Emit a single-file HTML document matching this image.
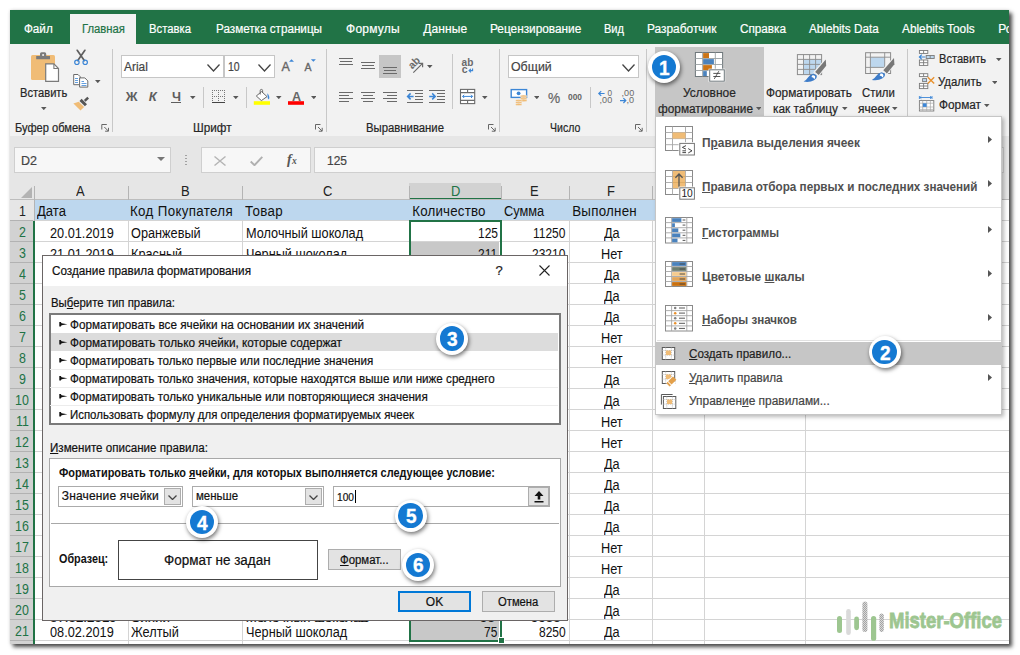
<!DOCTYPE html>
<html lang="ru"><head><meta charset="utf-8"><title>Условное форматирование</title>
<style>
html,body{margin:0;padding:0;background:#fff}
body{width:1020px;height:655px;position:relative;overflow:hidden;font-family:"Liberation Sans",sans-serif;font-size:12px}
#s{position:absolute;left:0;top:0;width:1020px;height:655px;overflow:hidden}
#s div,#s svg,#s span.t{position:absolute;box-sizing:border-box}
#s span.t{white-space:pre;-webkit-text-stroke:0.2px}
u{text-decoration:underline;text-underline-offset:1px}
</style></head><body><div id="s">
<div style="left:10px;top:10px;width:1000px;height:34px;background:#217346"></div>
<div style="left:10px;top:44px;width:1000px;height:92px;background:#f2f2f2"></div>
<div style="left:10px;top:136px;width:1000px;height:47px;background:#e6e6e6"></div>
<div style="left:70px;top:14px;width:66px;height:31px;background:#f2f2f2"></div>
<span class="t" style="left:24.00px;top:22.00px;font-size:12px;line-height:14px;color:#fff;transform:scaleX(0.9724);transform-origin:0 0;">Файл</span>
<span class="t" style="left:81.70px;top:22.00px;font-size:12px;line-height:14px;color:#217346;transform:scaleX(0.9412);transform-origin:0 0;">Главная</span>
<span class="t" style="left:149.00px;top:22.00px;font-size:12px;line-height:14px;color:#fff;transform:scaleX(0.9415);transform-origin:0 0;">Вставка</span>
<span class="t" style="left:215.70px;top:22.00px;font-size:12px;line-height:14px;color:#fff;transform:scaleX(0.9736);transform-origin:0 0;">Разметка страницы</span>
<span class="t" style="left:346.00px;top:22.00px;font-size:12px;line-height:14px;color:#fff;letter-spacing:0.254px;">Формулы</span>
<span class="t" style="left:423.30px;top:22.00px;font-size:12px;line-height:14px;color:#fff;letter-spacing:0.107px;">Данные</span>
<span class="t" style="left:490.00px;top:22.00px;font-size:12px;line-height:14px;color:#fff;transform:scaleX(0.9852);transform-origin:0 0;">Рецензирование</span>
<span class="t" style="left:604.30px;top:22.00px;font-size:12px;line-height:14px;color:#fff;transform:scaleX(0.9209);transform-origin:0 0;">Вид</span>
<span class="t" style="left:647.30px;top:22.00px;font-size:12px;line-height:14px;color:#fff;transform:scaleX(0.9916);transform-origin:0 0;">Разработчик</span>
<span class="t" style="left:740.00px;top:22.00px;font-size:12px;line-height:14px;color:#fff;transform:scaleX(0.9771);transform-origin:0 0;">Справка</span>
<span class="t" style="left:809.30px;top:22.00px;font-size:12px;line-height:14px;color:#fff;transform:scaleX(0.9765);transform-origin:0 0;">Ablebits Data</span>
<span class="t" style="left:902.30px;top:22.00px;font-size:12px;line-height:14px;color:#fff;transform:scaleX(0.9847);transform-origin:0 0;">Ablebits Tools</span>
<span class="t" style="left:998.30px;top:22.00px;font-size:12px;line-height:14px;color:#fff;">Ро</span>
<div style="left:112px;top:49px;width:1px;height:83px;background:#c8c8c8"></div>
<div style="left:326px;top:49px;width:1px;height:83px;background:#c8c8c8"></div>
<div style="left:499px;top:49px;width:1px;height:83px;background:#c8c8c8"></div>
<div style="left:646px;top:49px;width:1px;height:83px;background:#c8c8c8"></div>
<div style="left:907px;top:49px;width:1px;height:83px;background:#c8c8c8"></div>
<span class="t" style="left:19.70px;top:85.50px;font-size:12px;line-height:14px;color:#262626;transform:scaleX(0.9297);transform-origin:0 0;">Вставить</span>
<span class="t" style="left:14.60px;top:120.50px;font-size:12px;line-height:14px;color:#262626;transform:scaleX(0.9246);transform-origin:0 0;">Буфер обмена</span>
<span class="t" style="left:192.80px;top:120.50px;font-size:12px;line-height:14px;color:#262626;transform:scaleX(0.9751);transform-origin:0 0;">Шрифт</span>
<span class="t" style="left:365.60px;top:120.50px;font-size:12px;line-height:14px;color:#262626;transform:scaleX(0.9442);transform-origin:0 0;">Выравнивание</span>
<span class="t" style="left:550.00px;top:120.50px;font-size:12px;line-height:14px;color:#262626;transform:scaleX(0.8779);transform-origin:0 0;">Число</span>
<div style="left:121px;top:55px;width:103px;height:23px;background:#fff;border:1px solid #c6c6c6"></div>
<div style="left:224px;top:55px;width:51px;height:23px;background:#fff;border:1px solid #c6c6c6"></div>
<div style="left:508px;top:55px;width:131px;height:23px;background:#fff;border:1px solid #c6c6c6"></div>
<span class="t" style="left:124.20px;top:59.80px;font-size:12.5px;line-height:14px;color:#444;transform:scaleX(0.9514);transform-origin:0 0;">Arial</span>
<span class="t" style="left:227.60px;top:59.80px;font-size:12.5px;line-height:14px;color:#444;transform:scaleX(0.8413);transform-origin:0 0;">10</span>
<span class="t" style="left:511.00px;top:59.80px;font-size:12.5px;line-height:14px;color:#444;transform:scaleX(0.9893);transform-origin:0 0;">Общий</span>
<svg style="left:207px;top:63.5px;" width="13" height="8" viewBox="0 0 13 8"><path d="M0.5 0.5 L6.5 7 L12.5 0.5" fill="none" stroke="#444" stroke-width="1.3"/></svg>
<svg style="left:257.6px;top:63.5px;" width="13" height="8" viewBox="0 0 13 8"><path d="M0.5 0.5 L6.5 7 L12.5 0.5" fill="none" stroke="#444" stroke-width="1.3"/></svg>
<svg style="left:622px;top:63.5px;" width="13" height="8" viewBox="0 0 13 8"><path d="M0.5 0.5 L6.5 7 L12.5 0.5" fill="none" stroke="#444" stroke-width="1.3"/></svg>
<span class="t" style="left:125.80px;top:88.80px;font-size:13px;line-height:15px;color:#5e5e5e;font-weight:700;letter-spacing:0.250px;-webkit-text-stroke:0;">Ж</span>
<span class="t" style="left:148.80px;top:88.80px;font-size:13px;line-height:15px;color:#5e5e5e;font-weight:700;font-style:italic;letter-spacing:0.800px;-webkit-text-stroke:0;">К</span>
<span class="t" style="left:171.50px;top:88.80px;font-size:13px;line-height:15px;color:#5e5e5e;font-weight:700;transform:scaleX(0.9846);transform-origin:0 0;-webkit-text-stroke:0;">Ч</span>
<div style="left:171px;top:102px;width:10px;height:1px;background:#5e5e5e"></div>
<svg style="left:190px;top:96px;" width="5.6" height="3.2" viewBox="0 0 5.6 3.2"><path d="M0 0 H5.6 L2.8 3.2 Z" fill="#585858"/></svg>
<div style="left:203px;top:87px;width:1px;height:21px;background:#c8c8c8"></div>
<div style="left:246px;top:87px;width:1px;height:21px;background:#c8c8c8"></div>
<svg style="left:233px;top:96px;" width="5.6" height="3.2" viewBox="0 0 5.6 3.2"><path d="M0 0 H5.6 L2.8 3.2 Z" fill="#585858"/></svg>
<svg style="left:276px;top:96px;" width="5.6" height="3.2" viewBox="0 0 5.6 3.2"><path d="M0 0 H5.6 L2.8 3.2 Z" fill="#585858"/></svg>
<svg style="left:310.5px;top:96px;" width="5.6" height="3.2" viewBox="0 0 5.6 3.2"><path d="M0 0 H5.6 L2.8 3.2 Z" fill="#585858"/></svg>
<div style="left:655px;top:47px;width:109px;height:70px;background:#c6c6c6"></div>
<span class="t" style="left:683.20px;top:85.80px;font-size:12px;line-height:14px;color:#262626;transform:scaleX(0.9965);transform-origin:0 0;">Условное</span>
<span class="t" style="left:657.70px;top:101.60px;font-size:12px;line-height:14px;color:#262626;transform:scaleX(0.9859);transform-origin:0 0;">форматирование</span>
<svg style="left:755.5px;top:107px;" width="5.6" height="3.2" viewBox="0 0 5.6 3.2"><path d="M0 0 H5.6 L2.8 3.2 Z" fill="#585858"/></svg>
<span class="t" style="left:766.40px;top:85.80px;font-size:12px;line-height:14px;color:#262626;transform:scaleX(0.9865);transform-origin:0 0;">Форматировать</span>
<span class="t" style="left:773.30px;top:101.60px;font-size:12px;line-height:14px;color:#262626;transform:scaleX(0.9891);transform-origin:0 0;">как таблицу</span>
<svg style="left:842px;top:107px;" width="5.6" height="3.2" viewBox="0 0 5.6 3.2"><path d="M0 0 H5.6 L2.8 3.2 Z" fill="#585858"/></svg>
<span class="t" style="left:861.50px;top:85.80px;font-size:12px;line-height:14px;color:#262626;transform:scaleX(0.9486);transform-origin:0 0;">Стили</span>
<span class="t" style="left:858.00px;top:101.60px;font-size:12px;line-height:14px;color:#262626;letter-spacing:0.028px;">ячеек</span>
<svg style="left:892px;top:107px;" width="5.6" height="3.2" viewBox="0 0 5.6 3.2"><path d="M0 0 H5.6 L2.8 3.2 Z" fill="#585858"/></svg>
<span class="t" style="left:938.50px;top:52.00px;font-size:12px;line-height:14px;color:#262626;transform:scaleX(0.9258);transform-origin:0 0;">Вставить</span>
<svg style="left:996px;top:57.5px;" width="5.6" height="3.2" viewBox="0 0 5.6 3.2"><path d="M0 0 H5.6 L2.8 3.2 Z" fill="#585858"/></svg>
<span class="t" style="left:937.70px;top:75.00px;font-size:12px;line-height:14px;color:#262626;transform:scaleX(0.9514);transform-origin:0 0;">Удалить</span>
<svg style="left:991.5px;top:80.5px;" width="5.6" height="3.2" viewBox="0 0 5.6 3.2"><path d="M0 0 H5.6 L2.8 3.2 Z" fill="#585858"/></svg>
<span class="t" style="left:938.50px;top:98.30px;font-size:12px;line-height:14px;color:#262626;transform:scaleX(0.9850);transform-origin:0 0;">Формат</span>
<svg style="left:984px;top:104px;" width="5.6" height="3.2" viewBox="0 0 5.6 3.2"><path d="M0 0 H5.6 L2.8 3.2 Z" fill="#585858"/></svg>
<div style="left:452px;top:54px;width:1px;height:55px;background:#c8c8c8"></div>
<div style="left:590px;top:87px;width:1px;height:21px;background:#c8c8c8"></div>
<div style="left:379px;top:55px;width:22px;height:23px;background:#c6c6c6"></div>
<svg style="left:427px;top:65px;" width="5.6" height="3.2" viewBox="0 0 5.6 3.2"><path d="M0 0 H5.6 L2.8 3.2 Z" fill="#585858"/></svg>
<svg style="left:482px;top:96px;" width="5.6" height="3.2" viewBox="0 0 5.6 3.2"><path d="M0 0 H5.6 L2.8 3.2 Z" fill="#585858"/></svg>
<svg style="left:533.5px;top:96px;" width="5.6" height="3.2" viewBox="0 0 5.6 3.2"><path d="M0 0 H5.6 L2.8 3.2 Z" fill="#585858"/></svg>
<svg style="left:41px;top:107px;" width="5.6" height="3.2" viewBox="0 0 5.6 3.2"><path d="M0 0 H5.6 L2.8 3.2 Z" fill="#585858"/></svg>
<svg style="left:95px;top:80px;" width="5.6" height="3.2" viewBox="0 0 5.6 3.2"><path d="M0 0 H5.6 L2.8 3.2 Z" fill="#585858"/></svg>
<span class="t" style="left:547.50px;top:89.60px;font-size:14.5px;line-height:16px;color:#666;transform:scaleX(0.9453);transform-origin:0 0;">%</span>
<span class="t" style="left:567.80px;top:91.80px;font-size:8.6px;line-height:10px;color:#666;font-weight:700;transform:scaleX(0.9760);transform-origin:0 0;-webkit-text-stroke:0;">000</span>
<div style="left:14px;top:147px;width:157px;height:26px;background:#f7f7f7;border:1px solid #cfcfcf"></div>
<div style="left:201px;top:147px;width:110px;height:26px;background:#f7f7f7;border:1px solid #cfcfcf"></div>
<div style="left:314px;top:147px;width:690px;height:26px;background:#f7f7f7;border:1px solid #cfcfcf"></div>
<span class="t" style="left:21.00px;top:153.60px;font-size:12.5px;line-height:14px;color:#444;letter-spacing:0.008px;">D2</span>
<svg style="left:156.7px;top:157px;" width="8" height="4" viewBox="0 0 8 4"><path d="M0 0 H8 L4.0 4 Z" fill="#777"/></svg>
<div style="left:185.3px;top:154.5px;width:1.6px;height:1.6px;background:#a2a2a2"></div>
<div style="left:185.3px;top:157.5px;width:1.6px;height:1.6px;background:#a2a2a2"></div>
<div style="left:185.3px;top:160.5px;width:1.6px;height:1.6px;background:#a2a2a2"></div>
<div style="left:185.3px;top:163.5px;width:1.6px;height:1.6px;background:#a2a2a2"></div>
<svg style="left:214px;top:155.5px;" width="12" height="10" viewBox="0 0 12 10"><path d="M0.5 0.5 L11.5 9.5 M11.5 0.5 L0.5 9.5" stroke="#b5b5b5" stroke-width="1.4" fill="none"/></svg>
<svg style="left:250px;top:155.5px;" width="13" height="10" viewBox="0 0 13 10"><path d="M0.7 5.5 L4.5 9.2 L12.3 0.8" stroke="#b0b0b0" stroke-width="1.9" fill="none"/></svg>
<span class="t" style="left:287.00px;top:151.60px;font-size:14px;line-height:16px;color:#555;font-weight:700;font-style:italic;font-family:'Liberation Serif', serif;-webkit-text-stroke:0;">f</span>
<span class="t" style="left:292.00px;top:156.40px;font-size:9.5px;line-height:11px;color:#555;font-weight:700;font-style:italic;font-family:'Liberation Serif', serif;-webkit-text-stroke:0;">x</span>
<span class="t" style="left:326.50px;top:154.00px;font-size:12.5px;line-height:14px;color:#444;transform:scaleX(0.9588);transform-origin:0 0;">125</span>
<div style="left:10px;top:183px;width:1000px;height:17px;background:#e6e6e6"></div>
<div style="left:10px;top:200px;width:24px;height:444px;background:#e6e6e6"></div>
<div style="left:34px;top:200px;width:976px;height:444px;background:#fff"></div>
<div style="left:35px;top:200px;width:620px;height:21px;background:#bdd7ee"></div>
<div style="left:409px;top:183px;width:92px;height:17px;background:#d2d2d2"></div>
<div style="left:409px;top:198px;width:92px;height:2px;background:#217346"></div>
<div style="left:10px;top:221px;width:23px;height:423px;background:#d2d2d2"></div>
<div style="left:10px;top:220px;width:1000px;height:1px;background:#d4d4d4"></div>
<div style="left:10px;top:220px;width:23px;height:1px;background:#b2b2b2"></div>
<div style="left:10px;top:241px;width:1000px;height:1px;background:#d4d4d4"></div>
<div style="left:10px;top:241px;width:23px;height:1px;background:#b2b2b2"></div>
<div style="left:10px;top:262px;width:1000px;height:1px;background:#d4d4d4"></div>
<div style="left:10px;top:262px;width:23px;height:1px;background:#b2b2b2"></div>
<div style="left:10px;top:283px;width:1000px;height:1px;background:#d4d4d4"></div>
<div style="left:10px;top:283px;width:23px;height:1px;background:#b2b2b2"></div>
<div style="left:10px;top:304px;width:1000px;height:1px;background:#d4d4d4"></div>
<div style="left:10px;top:304px;width:23px;height:1px;background:#b2b2b2"></div>
<div style="left:10px;top:325px;width:1000px;height:1px;background:#d4d4d4"></div>
<div style="left:10px;top:325px;width:23px;height:1px;background:#b2b2b2"></div>
<div style="left:10px;top:346px;width:1000px;height:1px;background:#d4d4d4"></div>
<div style="left:10px;top:346px;width:23px;height:1px;background:#b2b2b2"></div>
<div style="left:10px;top:367px;width:1000px;height:1px;background:#d4d4d4"></div>
<div style="left:10px;top:367px;width:23px;height:1px;background:#b2b2b2"></div>
<div style="left:10px;top:388px;width:1000px;height:1px;background:#d4d4d4"></div>
<div style="left:10px;top:388px;width:23px;height:1px;background:#b2b2b2"></div>
<div style="left:10px;top:409px;width:1000px;height:1px;background:#d4d4d4"></div>
<div style="left:10px;top:409px;width:23px;height:1px;background:#b2b2b2"></div>
<div style="left:10px;top:430px;width:1000px;height:1px;background:#d4d4d4"></div>
<div style="left:10px;top:430px;width:23px;height:1px;background:#b2b2b2"></div>
<div style="left:10px;top:451px;width:1000px;height:1px;background:#d4d4d4"></div>
<div style="left:10px;top:451px;width:23px;height:1px;background:#b2b2b2"></div>
<div style="left:10px;top:472px;width:1000px;height:1px;background:#d4d4d4"></div>
<div style="left:10px;top:472px;width:23px;height:1px;background:#b2b2b2"></div>
<div style="left:10px;top:493px;width:1000px;height:1px;background:#d4d4d4"></div>
<div style="left:10px;top:493px;width:23px;height:1px;background:#b2b2b2"></div>
<div style="left:10px;top:514px;width:1000px;height:1px;background:#d4d4d4"></div>
<div style="left:10px;top:514px;width:23px;height:1px;background:#b2b2b2"></div>
<div style="left:10px;top:535px;width:1000px;height:1px;background:#d4d4d4"></div>
<div style="left:10px;top:535px;width:23px;height:1px;background:#b2b2b2"></div>
<div style="left:10px;top:556px;width:1000px;height:1px;background:#d4d4d4"></div>
<div style="left:10px;top:556px;width:23px;height:1px;background:#b2b2b2"></div>
<div style="left:10px;top:577px;width:1000px;height:1px;background:#d4d4d4"></div>
<div style="left:10px;top:577px;width:23px;height:1px;background:#b2b2b2"></div>
<div style="left:10px;top:598px;width:1000px;height:1px;background:#d4d4d4"></div>
<div style="left:10px;top:598px;width:23px;height:1px;background:#b2b2b2"></div>
<div style="left:10px;top:619px;width:1000px;height:1px;background:#d4d4d4"></div>
<div style="left:10px;top:619px;width:23px;height:1px;background:#b2b2b2"></div>
<div style="left:10px;top:640px;width:1000px;height:1px;background:#d4d4d4"></div>
<div style="left:10px;top:640px;width:23px;height:1px;background:#b2b2b2"></div>
<div style="left:10px;top:199px;width:1000px;height:1px;background:#bdbdbd"></div>
<div style="left:34px;top:186px;width:1px;height:14px;background:#b4b4b4"></div>
<div style="left:128px;top:186px;width:1px;height:14px;background:#b4b4b4"></div>
<div style="left:128px;top:221px;width:1px;height:423px;background:#d4d4d4"></div>
<div style="left:242px;top:186px;width:1px;height:14px;background:#b4b4b4"></div>
<div style="left:242px;top:221px;width:1px;height:423px;background:#d4d4d4"></div>
<div style="left:409px;top:186px;width:1px;height:14px;background:#b4b4b4"></div>
<div style="left:409px;top:221px;width:1px;height:423px;background:#d4d4d4"></div>
<div style="left:501px;top:186px;width:1px;height:14px;background:#b4b4b4"></div>
<div style="left:501px;top:221px;width:1px;height:423px;background:#d4d4d4"></div>
<div style="left:569px;top:186px;width:1px;height:14px;background:#b4b4b4"></div>
<div style="left:569px;top:221px;width:1px;height:423px;background:#d4d4d4"></div>
<div style="left:652px;top:186px;width:1px;height:14px;background:#b4b4b4"></div>
<div style="left:652px;top:221px;width:1px;height:423px;background:#d4d4d4"></div>
<div style="left:704px;top:186px;width:1px;height:14px;background:#b4b4b4"></div>
<div style="left:704px;top:221px;width:1px;height:423px;background:#d4d4d4"></div>
<div style="left:805px;top:186px;width:1px;height:14px;background:#b4b4b4"></div>
<div style="left:805px;top:221px;width:1px;height:423px;background:#d4d4d4"></div>
<div style="left:34px;top:200px;width:1px;height:21px;background:#b4b4b4"></div>
<div style="left:33px;top:221px;width:2px;height:423px;background:#217346"></div>
<svg style="left:21px;top:187px;" width="11" height="11" viewBox="0 0 11 11"><path d="M11 0 V11 H0 Z" fill="#b3b3b3"/></svg>
<span class="t" style="left:76.19px;top:184.00px;font-size:13.33px;line-height:15px;color:#222;transform:scale(0.9700,1.07);transform-origin:0 12px;-webkit-text-stroke:0;">A</span>
<span class="t" style="left:180.69px;top:184.00px;font-size:13.33px;line-height:15px;color:#222;transform:scale(0.9700,1.07);transform-origin:0 12px;-webkit-text-stroke:0;">B</span>
<span class="t" style="left:323.32px;top:184.00px;font-size:13.33px;line-height:15px;color:#222;transform:scale(0.9700,1.07);transform-origin:0 12px;-webkit-text-stroke:0;">C</span>
<span class="t" style="left:530.39px;top:184.00px;font-size:13.33px;line-height:15px;color:#222;transform:scale(0.9700,1.07);transform-origin:0 12px;-webkit-text-stroke:0;">E</span>
<span class="t" style="left:607.44px;top:184.00px;font-size:13.33px;line-height:15px;color:#222;transform:scale(0.9700,1.07);transform-origin:0 12px;-webkit-text-stroke:0;">F</span>
<span class="t" style="left:450.62px;top:184.00px;font-size:13.33px;line-height:15px;color:#217346;transform:scale(0.9700,1.07);transform-origin:0 12px;-webkit-text-stroke:0;">D</span>
<span class="t" style="left:18.55px;top:204.30px;font-size:13.33px;line-height:15px;color:#222;transform:scale(0.9300,1.07);transform-origin:0 12px;-webkit-text-stroke:0;">1</span>
<span class="t" style="left:18.55px;top:225.30px;font-size:13.33px;line-height:15px;color:#217346;transform:scale(0.9300,1.07);transform-origin:0 12px;-webkit-text-stroke:0;">2</span>
<span class="t" style="left:18.55px;top:246.30px;font-size:13.33px;line-height:15px;color:#217346;transform:scale(0.9300,1.07);transform-origin:0 12px;-webkit-text-stroke:0;">3</span>
<span class="t" style="left:18.55px;top:267.30px;font-size:13.33px;line-height:15px;color:#217346;transform:scale(0.9300,1.07);transform-origin:0 12px;-webkit-text-stroke:0;">4</span>
<span class="t" style="left:18.55px;top:288.30px;font-size:13.33px;line-height:15px;color:#217346;transform:scale(0.9300,1.07);transform-origin:0 12px;-webkit-text-stroke:0;">5</span>
<span class="t" style="left:18.55px;top:309.30px;font-size:13.33px;line-height:15px;color:#217346;transform:scale(0.9300,1.07);transform-origin:0 12px;-webkit-text-stroke:0;">6</span>
<span class="t" style="left:18.55px;top:330.30px;font-size:13.33px;line-height:15px;color:#217346;transform:scale(0.9300,1.07);transform-origin:0 12px;-webkit-text-stroke:0;">7</span>
<span class="t" style="left:18.55px;top:351.30px;font-size:13.33px;line-height:15px;color:#217346;transform:scale(0.9300,1.07);transform-origin:0 12px;-webkit-text-stroke:0;">8</span>
<span class="t" style="left:18.55px;top:372.30px;font-size:13.33px;line-height:15px;color:#217346;transform:scale(0.9300,1.07);transform-origin:0 12px;-webkit-text-stroke:0;">9</span>
<span class="t" style="left:15.10px;top:393.30px;font-size:13.33px;line-height:15px;color:#217346;transform:scale(0.9300,1.07);transform-origin:0 12px;-webkit-text-stroke:0;">10</span>
<span class="t" style="left:15.56px;top:414.30px;font-size:13.33px;line-height:15px;color:#217346;transform:scale(0.9300,1.07);transform-origin:0 12px;-webkit-text-stroke:0;">11</span>
<span class="t" style="left:15.10px;top:435.30px;font-size:13.33px;line-height:15px;color:#217346;transform:scale(0.9300,1.07);transform-origin:0 12px;-webkit-text-stroke:0;">12</span>
<span class="t" style="left:15.10px;top:456.30px;font-size:13.33px;line-height:15px;color:#217346;transform:scale(0.9300,1.07);transform-origin:0 12px;-webkit-text-stroke:0;">13</span>
<span class="t" style="left:15.10px;top:477.30px;font-size:13.33px;line-height:15px;color:#217346;transform:scale(0.9300,1.07);transform-origin:0 12px;-webkit-text-stroke:0;">14</span>
<span class="t" style="left:15.10px;top:498.30px;font-size:13.33px;line-height:15px;color:#217346;transform:scale(0.9300,1.07);transform-origin:0 12px;-webkit-text-stroke:0;">15</span>
<span class="t" style="left:15.10px;top:519.30px;font-size:13.33px;line-height:15px;color:#217346;transform:scale(0.9300,1.07);transform-origin:0 12px;-webkit-text-stroke:0;">16</span>
<span class="t" style="left:15.10px;top:540.30px;font-size:13.33px;line-height:15px;color:#217346;transform:scale(0.9300,1.07);transform-origin:0 12px;-webkit-text-stroke:0;">17</span>
<span class="t" style="left:15.10px;top:561.30px;font-size:13.33px;line-height:15px;color:#217346;transform:scale(0.9300,1.07);transform-origin:0 12px;-webkit-text-stroke:0;">18</span>
<span class="t" style="left:15.10px;top:582.30px;font-size:13.33px;line-height:15px;color:#217346;transform:scale(0.9300,1.07);transform-origin:0 12px;-webkit-text-stroke:0;">19</span>
<span class="t" style="left:15.10px;top:603.30px;font-size:13.33px;line-height:15px;color:#217346;transform:scale(0.9300,1.07);transform-origin:0 12px;-webkit-text-stroke:0;">20</span>
<span class="t" style="left:15.10px;top:624.30px;font-size:13.33px;line-height:15px;color:#217346;transform:scale(0.9300,1.07);transform-origin:0 12px;-webkit-text-stroke:0;">21</span>
<span class="t" style="left:37.00px;top:203.70px;font-size:13.33px;line-height:15px;color:#111;transform:scale(0.9825,1.07);transform-origin:0 12px;-webkit-text-stroke:0;">Дата</span>
<span class="t" style="left:130.00px;top:203.70px;font-size:13.33px;line-height:15px;color:#111;letter-spacing:0.338px;transform:scale(1.0000,1.07);transform-origin:0 12px;-webkit-text-stroke:0;">Код Покупателя</span>
<span class="t" style="left:245.00px;top:203.70px;font-size:13.33px;line-height:15px;color:#111;letter-spacing:0.344px;transform:scale(1.0000,1.07);transform-origin:0 12px;-webkit-text-stroke:0;">Товар</span>
<span class="t" style="left:412.20px;top:203.70px;font-size:13.33px;line-height:15px;color:#111;letter-spacing:0.192px;transform:scale(1.0000,1.07);transform-origin:0 12px;-webkit-text-stroke:0;">Количество</span>
<span class="t" style="left:503.50px;top:203.70px;font-size:13.33px;line-height:15px;color:#111;transform:scale(0.9596,1.07);transform-origin:0 12px;-webkit-text-stroke:0;">Сумма</span>
<span class="t" style="left:572.20px;top:203.70px;font-size:13.33px;line-height:15px;color:#111;letter-spacing:0.260px;transform:scale(1.0000,1.07);transform-origin:0 12px;-webkit-text-stroke:0;">Выполнен</span>
<div style="left:411px;top:242px;width:88px;height:398px;background:#c8c8c8"></div>
<div style="left:411px;top:262px;width:88px;height:1px;background:#bdbdbd"></div>
<div style="left:411px;top:283px;width:88px;height:1px;background:#bdbdbd"></div>
<div style="left:411px;top:304px;width:88px;height:1px;background:#bdbdbd"></div>
<div style="left:411px;top:325px;width:88px;height:1px;background:#bdbdbd"></div>
<div style="left:411px;top:346px;width:88px;height:1px;background:#bdbdbd"></div>
<div style="left:411px;top:367px;width:88px;height:1px;background:#bdbdbd"></div>
<div style="left:411px;top:388px;width:88px;height:1px;background:#bdbdbd"></div>
<div style="left:411px;top:409px;width:88px;height:1px;background:#bdbdbd"></div>
<div style="left:411px;top:430px;width:88px;height:1px;background:#bdbdbd"></div>
<div style="left:411px;top:451px;width:88px;height:1px;background:#bdbdbd"></div>
<div style="left:411px;top:472px;width:88px;height:1px;background:#bdbdbd"></div>
<div style="left:411px;top:493px;width:88px;height:1px;background:#bdbdbd"></div>
<div style="left:411px;top:514px;width:88px;height:1px;background:#bdbdbd"></div>
<div style="left:411px;top:535px;width:88px;height:1px;background:#bdbdbd"></div>
<div style="left:411px;top:556px;width:88px;height:1px;background:#bdbdbd"></div>
<div style="left:411px;top:577px;width:88px;height:1px;background:#bdbdbd"></div>
<div style="left:411px;top:598px;width:88px;height:1px;background:#bdbdbd"></div>
<div style="left:411px;top:619px;width:88px;height:1px;background:#bdbdbd"></div>
<div style="left:411px;top:640px;width:88px;height:1px;background:#bdbdbd"></div>
<span class="t" style="left:50.18px;top:225.70px;font-size:13.33px;line-height:15px;color:#111;transform:scale(0.9550,1.07);transform-origin:0 12px;-webkit-text-stroke:0;">20.01.2019</span>
<span class="t" style="left:130.70px;top:225.70px;font-size:13.33px;line-height:15px;color:#111;transform:scale(0.9550,1.07);transform-origin:0 12px;-webkit-text-stroke:0;">Оранжевый</span>
<span class="t" style="left:245.70px;top:225.70px;font-size:13.33px;line-height:15px;color:#111;transform:scale(0.9550,1.07);transform-origin:0 12px;-webkit-text-stroke:0;">Молочный шоколад</span>
<span class="t" style="left:477.58px;top:225.70px;font-size:13.33px;line-height:15px;color:#111;transform:scale(0.9000,1.07);transform-origin:0 12px;-webkit-text-stroke:0;">125</span>
<span class="t" style="left:533.13px;top:225.70px;font-size:13.33px;line-height:15px;color:#111;transform:scale(0.9000,1.07);transform-origin:0 12px;-webkit-text-stroke:0;">11250</span>
<span class="t" style="left:50.18px;top:246.70px;font-size:13.33px;line-height:15px;color:#111;transform:scale(0.9550,1.07);transform-origin:0 12px;-webkit-text-stroke:0;">21.01.2019</span>
<span class="t" style="left:130.70px;top:246.70px;font-size:13.33px;line-height:15px;color:#111;transform:scale(0.9550,1.07);transform-origin:0 12px;-webkit-text-stroke:0;">Красный</span>
<span class="t" style="left:245.70px;top:246.70px;font-size:13.33px;line-height:15px;color:#111;transform:scale(0.9550,1.07);transform-origin:0 12px;-webkit-text-stroke:0;">Черный шоколад</span>
<span class="t" style="left:478.48px;top:246.70px;font-size:13.33px;line-height:15px;color:#111;transform:scale(0.9000,1.07);transform-origin:0 12px;-webkit-text-stroke:0;">211</span>
<span class="t" style="left:532.24px;top:246.70px;font-size:13.33px;line-height:15px;color:#111;transform:scale(0.9000,1.07);transform-origin:0 12px;-webkit-text-stroke:0;">23210</span>
<span class="t" style="left:50.18px;top:603.70px;font-size:13.33px;line-height:15px;color:#111;transform:scale(0.9550,1.07);transform-origin:0 12px;-webkit-text-stroke:0;">07.02.2019</span>
<span class="t" style="left:130.70px;top:603.70px;font-size:13.33px;line-height:15px;color:#111;transform:scale(0.9550,1.07);transform-origin:0 12px;-webkit-text-stroke:0;">Синий</span>
<span class="t" style="left:245.70px;top:603.70px;font-size:13.33px;line-height:15px;color:#111;transform:scale(0.9550,1.07);transform-origin:0 12px;-webkit-text-stroke:0;">Молочный шоколад</span>
<span class="t" style="left:484.25px;top:603.70px;font-size:13.33px;line-height:15px;color:#111;transform:scale(0.9000,1.07);transform-origin:0 12px;-webkit-text-stroke:0;">90</span>
<span class="t" style="left:538.91px;top:603.70px;font-size:13.33px;line-height:15px;color:#111;transform:scale(0.9000,1.07);transform-origin:0 12px;-webkit-text-stroke:0;">9900</span>
<span class="t" style="left:50.18px;top:624.70px;font-size:13.33px;line-height:15px;color:#111;transform:scale(0.9550,1.07);transform-origin:0 12px;-webkit-text-stroke:0;">08.02.2019</span>
<span class="t" style="left:130.70px;top:624.70px;font-size:13.33px;line-height:15px;color:#111;transform:scale(0.9550,1.07);transform-origin:0 12px;-webkit-text-stroke:0;">Желтый</span>
<span class="t" style="left:245.70px;top:624.70px;font-size:13.33px;line-height:15px;color:#111;transform:scale(0.9550,1.07);transform-origin:0 12px;-webkit-text-stroke:0;">Черный шоколад</span>
<span class="t" style="left:484.25px;top:624.70px;font-size:13.33px;line-height:15px;color:#111;transform:scale(0.9000,1.07);transform-origin:0 12px;-webkit-text-stroke:0;">75</span>
<span class="t" style="left:538.91px;top:624.70px;font-size:13.33px;line-height:15px;color:#111;transform:scale(0.9000,1.07);transform-origin:0 12px;-webkit-text-stroke:0;">8250</span>
<span class="t" style="left:603.54px;top:225.70px;font-size:13.33px;line-height:15px;color:#111;transform:scale(0.9550,1.07);transform-origin:0 12px;-webkit-text-stroke:0;">Да</span>
<span class="t" style="left:600.56px;top:246.70px;font-size:13.33px;line-height:15px;color:#111;transform:scale(0.9550,1.07);transform-origin:0 12px;-webkit-text-stroke:0;">Нет</span>
<span class="t" style="left:603.54px;top:267.70px;font-size:13.33px;line-height:15px;color:#111;transform:scale(0.9550,1.07);transform-origin:0 12px;-webkit-text-stroke:0;">Да</span>
<span class="t" style="left:603.54px;top:288.70px;font-size:13.33px;line-height:15px;color:#111;transform:scale(0.9550,1.07);transform-origin:0 12px;-webkit-text-stroke:0;">Да</span>
<span class="t" style="left:603.54px;top:309.70px;font-size:13.33px;line-height:15px;color:#111;transform:scale(0.9550,1.07);transform-origin:0 12px;-webkit-text-stroke:0;">Да</span>
<span class="t" style="left:600.56px;top:330.70px;font-size:13.33px;line-height:15px;color:#111;transform:scale(0.9550,1.07);transform-origin:0 12px;-webkit-text-stroke:0;">Нет</span>
<span class="t" style="left:600.56px;top:351.70px;font-size:13.33px;line-height:15px;color:#111;transform:scale(0.9550,1.07);transform-origin:0 12px;-webkit-text-stroke:0;">Нет</span>
<span class="t" style="left:603.54px;top:372.70px;font-size:13.33px;line-height:15px;color:#111;transform:scale(0.9550,1.07);transform-origin:0 12px;-webkit-text-stroke:0;">Да</span>
<span class="t" style="left:603.54px;top:393.70px;font-size:13.33px;line-height:15px;color:#111;transform:scale(0.9550,1.07);transform-origin:0 12px;-webkit-text-stroke:0;">Да</span>
<span class="t" style="left:600.56px;top:414.70px;font-size:13.33px;line-height:15px;color:#111;transform:scale(0.9550,1.07);transform-origin:0 12px;-webkit-text-stroke:0;">Нет</span>
<span class="t" style="left:600.56px;top:435.70px;font-size:13.33px;line-height:15px;color:#111;transform:scale(0.9550,1.07);transform-origin:0 12px;-webkit-text-stroke:0;">Нет</span>
<span class="t" style="left:603.54px;top:456.70px;font-size:13.33px;line-height:15px;color:#111;transform:scale(0.9550,1.07);transform-origin:0 12px;-webkit-text-stroke:0;">Да</span>
<span class="t" style="left:603.54px;top:477.70px;font-size:13.33px;line-height:15px;color:#111;transform:scale(0.9550,1.07);transform-origin:0 12px;-webkit-text-stroke:0;">Да</span>
<span class="t" style="left:603.54px;top:498.70px;font-size:13.33px;line-height:15px;color:#111;transform:scale(0.9550,1.07);transform-origin:0 12px;-webkit-text-stroke:0;">Да</span>
<span class="t" style="left:603.54px;top:519.70px;font-size:13.33px;line-height:15px;color:#111;transform:scale(0.9550,1.07);transform-origin:0 12px;-webkit-text-stroke:0;">Да</span>
<span class="t" style="left:600.56px;top:540.70px;font-size:13.33px;line-height:15px;color:#111;transform:scale(0.9550,1.07);transform-origin:0 12px;-webkit-text-stroke:0;">Нет</span>
<span class="t" style="left:600.56px;top:561.70px;font-size:13.33px;line-height:15px;color:#111;transform:scale(0.9550,1.07);transform-origin:0 12px;-webkit-text-stroke:0;">Нет</span>
<span class="t" style="left:603.54px;top:582.70px;font-size:13.33px;line-height:15px;color:#111;transform:scale(0.9550,1.07);transform-origin:0 12px;-webkit-text-stroke:0;">Да</span>
<span class="t" style="left:603.54px;top:603.70px;font-size:13.33px;line-height:15px;color:#111;transform:scale(0.9550,1.07);transform-origin:0 12px;-webkit-text-stroke:0;">Да</span>
<span class="t" style="left:603.54px;top:624.70px;font-size:13.33px;line-height:15px;color:#111;transform:scale(0.9550,1.07);transform-origin:0 12px;-webkit-text-stroke:0;">Да</span>
<div style="left:409px;top:220px;width:93px;height:422px;border:2px solid #217346"></div>
<div style="left:498px;top:637px;width:7px;height:7px;background:#217346;border:1px solid #fff"></div>
<div style="left:42px;top:255px;width:526px;height:366px;background:#f0f0f0;border:1px solid #6a6565"></div>
<div style="left:43px;top:256px;width:524px;height:30px;background:#fff"></div>
<span class="t" style="left:51.80px;top:264.00px;font-size:12px;line-height:14px;color:#111;transform:scaleX(0.9776);transform-origin:0 0;">Создание правила форматирования</span>
<span class="t" style="left:495.38px;top:262.50px;font-size:13px;line-height:15px;color:#222;">?</span>
<svg style="left:539px;top:265px;" width="11" height="11" viewBox="0 0 11 11"><path d="M0.5 0.5 L10.5 10.5 M10.5 0.5 L0.5 10.5" stroke="#222" stroke-width="1.1" fill="none"/></svg>
<span class="t" style="left:50.50px;top:295.60px;font-size:12px;line-height:14px;color:#111;transform:scaleX(0.9481);transform-origin:0 0;">Вы<u>б</u>ерите тип правила:</span>
<div style="left:49px;top:313px;width:512px;height:112px;background:#fff;border:2px solid #7a7a7a"></div>
<div style="left:51px;top:332.5px;width:507px;height:18px;background:#dcdcdc"></div>
<div style="left:50px;top:369px;width:508px;height:1px;background:#ececec"></div>
<div style="left:50px;top:387px;width:508px;height:1px;background:#ececec"></div>
<div style="left:50px;top:405px;width:508px;height:1px;background:#ececec"></div>
<span class="t" style="left:70.00px;top:317.50px;font-size:12px;line-height:14px;color:#111;transform:scaleX(0.9784);transform-origin:0 0;">Форматировать все ячейки на основании их значений</span>
<svg style="left:58.5px;top:322.0px;" width="9" height="5" viewBox="0 0 9 5"><path d="M0.3 0 H1.8 L2.6 1.3 L8.4 2.3 L2.6 3.3 L1.8 4.5 H0.3 Z" fill="#111"/></svg>
<span class="t" style="left:70.00px;top:335.50px;font-size:12px;line-height:14px;color:#111;transform:scaleX(0.9800);transform-origin:0 0;">Форматировать только ячейки, которые содержат</span>
<svg style="left:58.5px;top:340.0px;" width="9" height="5" viewBox="0 0 9 5"><path d="M0.3 0 H1.8 L2.6 1.3 L8.4 2.3 L2.6 3.3 L1.8 4.5 H0.3 Z" fill="#111"/></svg>
<span class="t" style="left:70.00px;top:353.50px;font-size:12px;line-height:14px;color:#111;transform:scaleX(0.9670);transform-origin:0 0;">Форматировать только первые или последние значения</span>
<svg style="left:58.5px;top:358.0px;" width="9" height="5" viewBox="0 0 9 5"><path d="M0.3 0 H1.8 L2.6 1.3 L8.4 2.3 L2.6 3.3 L1.8 4.5 H0.3 Z" fill="#111"/></svg>
<span class="t" style="left:70.00px;top:371.50px;font-size:12px;line-height:14px;color:#111;transform:scaleX(0.9694);transform-origin:0 0;">Форматировать только значения, которые находятся выше или ниже среднего</span>
<svg style="left:58.5px;top:376.0px;" width="9" height="5" viewBox="0 0 9 5"><path d="M0.3 0 H1.8 L2.6 1.3 L8.4 2.3 L2.6 3.3 L1.8 4.5 H0.3 Z" fill="#111"/></svg>
<span class="t" style="left:70.00px;top:389.50px;font-size:12px;line-height:14px;color:#111;transform:scaleX(0.9711);transform-origin:0 0;">Форматировать только уникальные или повторяющиеся значения</span>
<svg style="left:58.5px;top:394.0px;" width="9" height="5" viewBox="0 0 9 5"><path d="M0.3 0 H1.8 L2.6 1.3 L8.4 2.3 L2.6 3.3 L1.8 4.5 H0.3 Z" fill="#111"/></svg>
<span class="t" style="left:70.00px;top:407.50px;font-size:12px;line-height:14px;color:#111;transform:scaleX(0.9525);transform-origin:0 0;">Использовать формулу для определения форматируемых ячеек</span>
<svg style="left:58.5px;top:412.0px;" width="9" height="5" viewBox="0 0 9 5"><path d="M0.3 0 H1.8 L2.6 1.3 L8.4 2.3 L2.6 3.3 L1.8 4.5 H0.3 Z" fill="#111"/></svg>
<span class="t" style="left:50.00px;top:440.50px;font-size:12px;line-height:14px;color:#111;transform:scaleX(0.9659);transform-origin:0 0;"><u>И</u>змените описание правила:</span>
<div style="left:49px;top:458px;width:512px;height:129px;background:#fff;border:1px solid #a8a8a8"></div>
<span class="t" style="left:59.00px;top:465.80px;font-size:12px;line-height:14px;color:#111;font-weight:700;transform:scaleX(0.9110);transform-origin:0 0;-webkit-text-stroke:0;">Форматировать только <u>я</u>чейки, для которых выполняется следующее условие:</span>
<div style="left:58px;top:486px;width:125px;height:21px;background:#fff;border:1px solid #ababab"></div>
<div style="left:192px;top:486px;width:132px;height:21px;background:#fff;border:1px solid #ababab"></div>
<div style="left:333px;top:486px;width:217px;height:21px;background:#fff;border:1px solid #ababab"></div>
<div style="left:164px;top:488px;width:17px;height:17px;background:#e3e3e3;border:1px solid #adadad"></div>
<svg style="left:168px;top:494.5px;" width="9" height="5.5" viewBox="0 0 9 5.5"><path d="M0.5 0.5 L4.5 4.5 L8.5 0.5" fill="none" stroke="#444" stroke-width="1.3"/></svg>
<div style="left:305px;top:488px;width:17px;height:17px;background:#e3e3e3;border:1px solid #adadad"></div>
<svg style="left:309px;top:494.5px;" width="9" height="5.5" viewBox="0 0 9 5.5"><path d="M0.5 0.5 L4.5 4.5 L8.5 0.5" fill="none" stroke="#444" stroke-width="1.3"/></svg>
<div style="left:528px;top:487px;width:21px;height:19px;background:#e3e3e3;border:1px solid #adadad"></div>
<svg style="left:534px;top:491px;" width="10" height="12" viewBox="0 0 10 12"><path d="M5 0 L9.5 5 H6.3 V8.5 H3.7 V5 H0.5 Z M0.5 10 H9.5 V11.5 H0.5 Z" fill="#111"/></svg>
<span class="t" style="left:61.80px;top:488.70px;font-size:12px;line-height:14px;color:#111;letter-spacing:0.157px;">Значение ячейки</span>
<span class="t" style="left:195.70px;top:488.70px;font-size:12px;line-height:14px;color:#111;transform:scaleX(0.9522);transform-origin:0 0;">меньше</span>
<span class="t" style="left:337.30px;top:490.80px;font-size:11px;line-height:12px;color:#111;transform:scaleX(0.9260);transform-origin:0 0;">100</span>
<div style="left:355px;top:490px;width:1px;height:13px;background:#000"></div>
<div style="left:51px;top:523px;width:508px;height:1px;background:#a8a8a8"></div>
<span class="t" style="left:59.00px;top:552.20px;font-size:12px;line-height:14px;color:#111;font-weight:700;transform:scaleX(0.8986);transform-origin:0 0;-webkit-text-stroke:0;">Образец:</span>
<div style="left:118px;top:540px;width:200px;height:40px;background:#fff;border:1px solid #444"></div>
<span class="t" style="left:164.00px;top:551.60px;font-size:14px;line-height:16px;color:#111;transform:scaleX(0.9610);transform-origin:0 0;">Формат не задан</span>
<div style="left:328px;top:549px;width:73px;height:21px;background:#e3e3e3;border:1px solid #adadad"></div>
<span class="t" style="left:340.00px;top:553.00px;font-size:12px;line-height:14px;color:#111;transform:scaleX(0.9491);transform-origin:0 0;"><u>Ф</u>ормат...</span>
<div style="left:398px;top:591px;width:73px;height:21px;background:#e3e3e3;border:2px solid #0078d7"></div>
<span class="t" style="left:425.83px;top:594.60px;font-size:12px;line-height:14px;color:#111;">OK</span>
<div style="left:482px;top:591px;width:73px;height:21px;background:#e3e3e3;border:1px solid #adadad"></div>
<span class="t" style="left:498.20px;top:594.60px;font-size:12px;line-height:14px;color:#111;transform:scaleX(0.9358);transform-origin:0 0;">Отмена</span>
<div style="left:655px;top:116px;width:347px;height:299px;background:#fff;border:1px solid #c6c6c6;box-shadow:2px 2px 4px rgba(0,0,0,0.28)"></div>
<span class="t" style="left:702.20px;top:135.50px;font-size:12.5px;line-height:14px;color:#505050;font-weight:700;transform:scaleX(0.9512);transform-origin:0 0;-webkit-text-stroke:0;">П<u>р</u>авила выделения ячеек</span>
<svg style="left:988px;top:136.0px;" width="4" height="7" viewBox="0 0 4 7"><path d="M0 0 L4 3.5 L0 7 Z" fill="#555"/></svg>
<span class="t" style="left:702.20px;top:179.80px;font-size:12.5px;line-height:14px;color:#505050;font-weight:700;transform:scaleX(0.9368);transform-origin:0 0;-webkit-text-stroke:0;"><u>П</u>равила отбора первых и последних значений</span>
<svg style="left:988px;top:180.0px;" width="4" height="7" viewBox="0 0 4 7"><path d="M0 0 L4 3.5 L0 7 Z" fill="#555"/></svg>
<span class="t" style="left:702.20px;top:225.60px;font-size:12.5px;line-height:14px;color:#505050;font-weight:700;transform:scaleX(0.9180);transform-origin:0 0;-webkit-text-stroke:0;"><u>Г</u>истограммы</span>
<svg style="left:988px;top:226.0px;" width="4" height="7" viewBox="0 0 4 7"><path d="M0 0 L4 3.5 L0 7 Z" fill="#555"/></svg>
<span class="t" style="left:702.20px;top:269.50px;font-size:12.5px;line-height:14px;color:#505050;font-weight:700;transform:scaleX(0.9493);transform-origin:0 0;-webkit-text-stroke:0;">Цветовые <u>ш</u>калы</span>
<svg style="left:988px;top:270.0px;" width="4" height="7" viewBox="0 0 4 7"><path d="M0 0 L4 3.5 L0 7 Z" fill="#555"/></svg>
<span class="t" style="left:702.20px;top:313.30px;font-size:12.5px;line-height:14px;color:#505050;font-weight:700;transform:scaleX(0.9295);transform-origin:0 0;-webkit-text-stroke:0;"><u>Н</u>аборы значков</span>
<svg style="left:988px;top:314.0px;" width="4" height="7" viewBox="0 0 4 7"><path d="M0 0 L4 3.5 L0 7 Z" fill="#555"/></svg>
<div style="left:700px;top:206.5px;width:301px;height:1px;background:#e1e1e1"></div>
<div style="left:657px;top:340px;width:344px;height:1px;background:#e1e1e1"></div>
<div style="left:656px;top:342px;width:345px;height:23px;background:#c6c6c6"></div>
<span class="t" style="left:688.60px;top:347.00px;font-size:12px;line-height:14px;color:#222;transform:scaleX(0.9679);transform-origin:0 0;"><u>С</u>оздать правило...</span>
<span class="t" style="left:688.60px;top:371.00px;font-size:12px;line-height:14px;color:#444;transform:scaleX(0.9775);transform-origin:0 0;"><u>У</u>далить правила</span>
<span class="t" style="left:688.60px;top:394.00px;font-size:12px;line-height:14px;color:#444;transform:scaleX(0.9936);transform-origin:0 0;">Управлен<u>и</u>е правилами...</span>
<svg style="left:988px;top:374px;" width="4" height="7" viewBox="0 0 4 7"><path d="M0 0 L4 3.5 L0 7 Z" fill="#555"/></svg>
<svg style="left:0;top:0" width="1020" height="140" viewBox="0 0 1020 140"><rect x="31" y="55" width="24" height="25" rx="1.5" fill="#f0bc76"/><path d="M36.2 56 H40 V54 a1.6 1.6 0 0 1 1.6 -1.7 h3 a1.6 1.6 0 0 1 1.6 1.7 V56 H50 v3.2 H36.2 z" fill="#7b7b7b"/><circle cx="43.1" cy="55" r="1.05" fill="#f2f2f2"/><path d="M45.7 63.9 h8.2 l4.6 4.6 v12.9 h-12.8 z" fill="#fff" stroke="#7a7a7a" stroke-width="1.2"/><path d="M53.9 63.9 v4.6 h4.6" fill="none" stroke="#7a7a7a" stroke-width="1.1"/><path d="M77.2 50.3 L84.3 60.6 M84.9 50.3 L77.8 60.6" stroke="#5f5f5f" stroke-width="1.7" fill="none" stroke-linecap="round"/><circle cx="76.9" cy="62.3" r="2.2" fill="none" stroke="#3c86d6" stroke-width="1.2"/><circle cx="85.2" cy="62.3" r="2.2" fill="none" stroke="#3c86d6" stroke-width="1.2"/><path d="M73.7 74.5 h4.3 l2.2 2.2 v8 h-6.5 z" fill="#fff" stroke="#6a6a6a" stroke-width="1"/><path d="M79.6 77.9 h5.2 l3 3 v6.2 h-8.2 z" fill="#fff" stroke="#6a6a6a" stroke-width="1"/><path d="M75 78.5 h3 M75 80.5 h3 M75 82.5 h3 M81.5 81.5 h2.5 M81.5 83.5 h5 M81.5 85.5 h5" stroke="#3c86d6" stroke-width="0.8" fill="none"/><path d="M87.3 96.7 L89 98.4 L85.6 101.8 L83.9 100.1 Z" fill="#555"/><path d="M81.6 98.8 L87 104.2 L84.9 106.3 L79.5 100.9 Z" fill="#555"/><path d="M78.7 101.7 L84.1 107.1 L80.5 110.6 L73.4 103.5 Z" fill="#f0bc76"/><path d="M289 61.7 L291.5 59.2 L294 61.7 Z" fill="#3c86d6"/><path d="M310.9 59.3 H315.9 L313.4 61.8 Z" fill="#3c86d6"/><rect x="212" y="90" width="1" height="1" fill="#777"/><rect x="214" y="90" width="1" height="1" fill="#777"/><rect x="216" y="90" width="1" height="1" fill="#777"/><rect x="218" y="90" width="1" height="1" fill="#777"/><rect x="220" y="90" width="1" height="1" fill="#777"/><rect x="222" y="90" width="1" height="1" fill="#777"/><rect x="224" y="90" width="1" height="1" fill="#777"/><rect x="212" y="96" width="1" height="1" fill="#777"/><rect x="214" y="96" width="1" height="1" fill="#777"/><rect x="216" y="96" width="1" height="1" fill="#777"/><rect x="218" y="96" width="1" height="1" fill="#777"/><rect x="220" y="96" width="1" height="1" fill="#777"/><rect x="222" y="96" width="1" height="1" fill="#777"/><rect x="224" y="96" width="1" height="1" fill="#777"/><rect x="212" y="90" width="1" height="1" fill="#777"/><rect x="212" y="92" width="1" height="1" fill="#777"/><rect x="212" y="94" width="1" height="1" fill="#777"/><rect x="212" y="96" width="1" height="1" fill="#777"/><rect x="212" y="98" width="1" height="1" fill="#777"/><rect x="212" y="100" width="1" height="1" fill="#777"/><rect x="218" y="90" width="1" height="1" fill="#777"/><rect x="218" y="92" width="1" height="1" fill="#777"/><rect x="218" y="94" width="1" height="1" fill="#777"/><rect x="218" y="96" width="1" height="1" fill="#777"/><rect x="218" y="98" width="1" height="1" fill="#777"/><rect x="218" y="100" width="1" height="1" fill="#777"/><rect x="224" y="90" width="1" height="1" fill="#777"/><rect x="224" y="92" width="1" height="1" fill="#777"/><rect x="224" y="94" width="1" height="1" fill="#777"/><rect x="224" y="96" width="1" height="1" fill="#777"/><rect x="224" y="98" width="1" height="1" fill="#777"/><rect x="224" y="100" width="1" height="1" fill="#777"/><rect x="212" y="102" width="13" height="1" fill="#444"/><rect x="253.8" y="101.2" width="16.2" height="3.6" fill="#ffff00"/><path d="M261.6 91.6 L267 96.6 L261.4 100.6 L256.3 96 Z" fill="#fff" stroke="#6a6a6a" stroke-width="1"/><path d="M260.2 94.5 V90.6 a1.2 1.2 0 0 1 2.4 0 V93" fill="none" stroke="#6a6a6a" stroke-width="1"/><path d="M267.3 93.3 Q270.3 96.5 268.9 99.6 Q267.3 98.5 267.6 96.6 Z" fill="#3c86d6"/><rect x="288" y="101.2" width="16" height="3.6" fill="#ff0000"/><rect x="339" y="58" width="14" height="1" fill="#6a6a6a"/><rect x="340" y="61" width="12" height="1" fill="#6a6a6a"/><rect x="339" y="64" width="14" height="1" fill="#6a6a6a"/><rect x="361" y="62" width="14" height="1" fill="#6a6a6a"/><rect x="362" y="65" width="12" height="1" fill="#6a6a6a"/><rect x="361" y="68" width="14" height="1" fill="#6a6a6a"/><rect x="383" y="67" width="14" height="1" fill="#6a6a6a"/><rect x="384" y="70" width="12" height="1" fill="#6a6a6a"/><rect x="383" y="73" width="14" height="1" fill="#6a6a6a"/><rect x="339" y="92" width="14" height="1" fill="#6a6a6a"/><rect x="361" y="92" width="14" height="1" fill="#6a6a6a"/><rect x="383" y="92" width="14" height="1" fill="#6a6a6a"/><rect x="339" y="95" width="10" height="1" fill="#6a6a6a"/><rect x="363" y="95" width="10" height="1" fill="#6a6a6a"/><rect x="387" y="95" width="10" height="1" fill="#6a6a6a"/><rect x="339" y="98" width="14" height="1" fill="#6a6a6a"/><rect x="361" y="98" width="14" height="1" fill="#6a6a6a"/><rect x="383" y="98" width="14" height="1" fill="#6a6a6a"/><rect x="339" y="101" width="10" height="1" fill="#6a6a6a"/><rect x="363" y="101" width="10" height="1" fill="#6a6a6a"/><rect x="387" y="101" width="10" height="1" fill="#6a6a6a"/><text transform="translate(412.2 69.6) rotate(-45)" font-family="Liberation Sans, sans-serif" font-size="10.5" font-weight="700" fill="#6a6a6a">ab</text><path d="M413.3 72.6 L422.3 63.6 M418.6 63.3 H422.6 V67.3" stroke="#6a6a6a" stroke-width="1.2" fill="none"/><text x="461.6" y="65.6" font-family="Liberation Sans, sans-serif" font-size="10.5" font-weight="700" fill="#6a6a6a" textLength="11.8" lengthAdjust="spacingAndGlyphs">ab</text><text x="461.8" y="72.8" font-family="Liberation Sans, sans-serif" font-size="10.5" font-weight="700" fill="#6a6a6a">c</text><path d="M472.6 68.4 V70.6 H469.2 M470.9 68.9 L469.1 70.6 L470.9 72.3" stroke="#3c86d6" stroke-width="1.1" fill="none"/><rect x="407" y="90" width="16" height="1" fill="#6a6a6a"/><rect x="407" y="102" width="16" height="1" fill="#6a6a6a"/><rect x="415" y="93" width="8" height="1" fill="#6a6a6a"/><rect x="415" y="96" width="8" height="1" fill="#6a6a6a"/><rect x="415" y="99" width="8" height="1" fill="#6a6a6a"/><path d="M413.6 96.4 H407.8 M410.6 93.4 L407.6 96.4 L410.6 99.4" stroke="#3c86d6" stroke-width="1.5" fill="none"/><rect x="429" y="90" width="16" height="1" fill="#6a6a6a"/><rect x="429" y="102" width="16" height="1" fill="#6a6a6a"/><rect x="437" y="93" width="8" height="1" fill="#6a6a6a"/><rect x="437" y="96" width="8" height="1" fill="#6a6a6a"/><rect x="437" y="99" width="8" height="1" fill="#6a6a6a"/><path d="M429.2 96.4 H435 M432.2 93.4 L435.2 96.4 L432.2 99.4" stroke="#3c86d6" stroke-width="1.5" fill="none"/><rect x="460.5" y="89.4" width="14.2" height="14.2" fill="#fff" stroke="#6a6a6a" stroke-width="1.1"/><path d="M460.5 92.6 H474.7 M460.5 100.4 H474.7 M467.6 89.4 V92.6 M467.6 100.4 V103.6" stroke="#6a6a6a" stroke-width="1.1" fill="none"/><path d="M462.6 96.4 H472.6 M464.2 94.8 L462.6 96.4 L464.2 98 M471 94.8 L472.6 96.4 L471 98" stroke="#3c86d6" stroke-width="1" fill="none"/><rect x="511.2" y="89.6" width="15.4" height="7.8" fill="#fff" stroke="#3c86d6" stroke-width="1.4"/><circle cx="518.6" cy="93.3" r="1.9" fill="#3c86d6"/><ellipse cx="523.6" cy="96.2" rx="3.4" ry="1.3" fill="#f0bc76" stroke="#f2f2f2" stroke-width="0.5"/><ellipse cx="523.6" cy="98.3" rx="3.4" ry="1.3" fill="#f0bc76" stroke="#f2f2f2" stroke-width="0.5"/><ellipse cx="523.6" cy="100.4" rx="3.4" ry="1.3" fill="#f0bc76" stroke="#f2f2f2" stroke-width="0.5"/><ellipse cx="518.7" cy="100.6" rx="3.2" ry="1.2" fill="#f0bc76" stroke="#f2f2f2" stroke-width="0.5"/><ellipse cx="518.7" cy="102.5" rx="3.2" ry="1.2" fill="#f0bc76" stroke="#f2f2f2" stroke-width="0.5"/><ellipse cx="518.7" cy="104.39999999999999" rx="3.2" ry="1.2" fill="#f0bc76" stroke="#f2f2f2" stroke-width="0.5"/><text x="607.4" y="95.8" font-family="Liberation Sans, sans-serif" font-size="8.2" fill="#6a6a6a">0</text><text x="599.6" y="103" font-family="Liberation Sans, sans-serif" font-size="8.2" fill="#6a6a6a" textLength="12.6" lengthAdjust="spacingAndGlyphs">,00</text><path d="M604.6 93.5 H598.8 M601.2 91.1 L598.8 93.5 L601.2 95.9" stroke="#3c86d6" stroke-width="1.2" fill="none"/><text x="621.6" y="95.8" font-family="Liberation Sans, sans-serif" font-size="8.2" fill="#6a6a6a" textLength="12.6" lengthAdjust="spacingAndGlyphs">,00</text><text x="626.6" y="103" font-family="Liberation Sans, sans-serif" font-size="8.2" fill="#6a6a6a" textLength="7.6" lengthAdjust="spacingAndGlyphs">,0</text><path d="M620 100.6 H625.8 M623.4 98.2 L625.8 100.6 L623.4 103" stroke="#3c86d6" stroke-width="1.2" fill="none"/><rect x="695.4" y="52.5" width="27.2" height="24" fill="#fff" stroke="#6f787c" stroke-width="1"/><path d="M702.6 52.5 V76.5 M715.3 52.5 V76.5 M695.4 58.5 H722.6 M695.4 64.5 H722.6 M695.4 70.5 H722.6" stroke="#9aa0a3" stroke-width="0.9" fill="none"/><rect x="703.1" y="53.1" width="5.9" height="4.9" fill="#cb7416"/><rect x="703.1" y="59.1" width="10.8" height="4.9" fill="#4a82bd"/><rect x="703.1" y="65.1" width="8.8" height="4.9" fill="#cb7416"/><rect x="703.1" y="71.1" width="3.7" height="4.9" fill="#4a82bd"/><rect x="708.6" y="68.7" width="16.6" height="13.4" fill="#fff"/><rect x="709.7" y="69.8" width="14.6" height="11.4" fill="#fff" stroke="#6f787c" stroke-width="1"/><path d="M713.3 73.4 H720.4 M713.3 76.5 H720.4 M714.3 78.9 L718.8 71.2" stroke="#444" stroke-width="0.9" fill="none"/><rect x="803.5" y="59.3" width="18" height="15.3" fill="#bdd7ee"/><rect x="797.4" y="54.6" width="24.2" height="20" fill="none" stroke="#8c8c8c" stroke-width="1"/><path d="M803.5 54.6 V74.6 M809.6 54.6 V74.6 M815.6 54.6 V74.6 M797.4 59.4 H821.6 M797.4 64.4 H821.6 M797.4 69.4 H821.6" stroke="#8c8c8c" stroke-width="0.9" fill="none"/><g transform="translate(816 73.6)"><path d="M-2.2 -2.2 L9.4 -15 L11 -8.4 L3 2.8 Z" fill="#f2f2f2"/><path d="M-0.9 -1.7 L9.8 -14 L10.2 -7.8 L2.7 1.5 Z" fill="#787878"/><path d="M-2.4 -1.4 L2.2 2.4" stroke="#f2f2f2" stroke-width="1.3"/><path d="M-2.6 0.2 Q-6 0.6 -8 4 Q-9.6 6.6 -12.4 8 Q-6 9 -2 6.6 Q1.6 4.4 0.6 1.6 Z" fill="#3d7cc9"/><path d="M-3.6 1.6 Q-1.6 1.2 -0.8 3 Q-0.6 4.6 -1.8 5.6 Q-2 3.6 -4.6 3.4 Z" fill="#fff"/></g><rect x="870.4" y="57.2" width="14.3" height="10.2" fill="#bdd7ee"/><rect x="865.6" y="52.7" width="25" height="20.8" fill="none" stroke="#8c8c8c" stroke-width="1"/><path d="M870.4 52.7 V73.5 M884.7 52.7 V73.5 M865.6 57.2 H890.6 M865.6 67.4 H890.6" stroke="#8c8c8c" stroke-width="0.9" fill="none"/><g transform="translate(884.2 72)"><path d="M-2.2 -2.2 L9.4 -15 L11 -8.4 L3 2.8 Z" fill="#f2f2f2"/><path d="M-0.9 -1.7 L9.8 -14 L10.2 -7.8 L2.7 1.5 Z" fill="#787878"/><path d="M-2.4 -1.4 L2.2 2.4" stroke="#f2f2f2" stroke-width="1.3"/><path d="M-2.6 0.2 Q-6 0.6 -8 4 Q-9.6 6.6 -12.4 8 Q-6 9 -2 6.6 Q1.6 4.4 0.6 1.6 Z" fill="#3d7cc9"/><path d="M-3.6 1.6 Q-1.6 1.2 -0.8 3 Q-0.6 4.6 -1.8 5.6 Q-2 3.6 -4.6 3.4 Z" fill="#fff"/></g><rect x="919.4" y="50.5" width="8.4" height="2.9" fill="#fff" stroke="#7a7a7a" stroke-width="0.9"/><path d="M923.6 50.5 v2.9" stroke="#7a7a7a" stroke-width="0.9"/><rect x="926.2" y="55.5" width="8" height="3" fill="#bdd7ee" stroke="#7a7a7a" stroke-width="0.9"/><path d="M930.2 55.5 v3" stroke="#7a7a7a" stroke-width="0.9"/><rect x="919.4" y="60" width="8.4" height="5.4" fill="#fff" stroke="#7a7a7a" stroke-width="0.9"/><path d="M923.6 60 v5.4" stroke="#7a7a7a" stroke-width="0.9"/><path d="M919.4 62.7 h8.4" stroke="#7a7a7a" stroke-width="0.9"/><path d="M925.4 57 H919.4 M921.8 54.6 L919.4 57 L921.8 59.4" stroke="#3c86d6" stroke-width="1.2" fill="none"/><rect x="919.4" y="73.7" width="8.4" height="2.9" fill="#fff" stroke="#7a7a7a" stroke-width="0.9"/><path d="M923.6 73.7 v2.9" stroke="#7a7a7a" stroke-width="0.9"/><rect x="922.6" y="78.6" width="4" height="3" fill="#bdd7ee" stroke="#7a7a7a" stroke-width="0.9"/><rect x="919.4" y="83.4" width="8.4" height="5.2" fill="#fff" stroke="#7a7a7a" stroke-width="0.9"/><path d="M923.6 83.4 v5.2" stroke="#7a7a7a" stroke-width="0.9"/><path d="M919.4 86.0 h8.4" stroke="#7a7a7a" stroke-width="0.9"/><path d="M927.8 77.2 L934.2 83.4 M934.2 77.2 L927.8 83.4" stroke="#e8912d" stroke-width="1.4" fill="none"/><path d="M919.6 97.5 H931.8 M919.4 96 V99 M932 96 V99 M921.4 96.2 L920 97.5 L921.4 98.8 M930 96.2 L931.4 97.5 L930 98.8" stroke="#3c86d6" stroke-width="0.9" fill="none"/><rect x="919.4" y="100.6" width="14.4" height="10.4" fill="#fff" stroke="#7a7a7a" stroke-width="0.9"/><path d="M922.7 100.6 V111 M926.7 100.6 V111 M930.4 100.6 V111 M919.4 103.2 H933.8 M919.4 107 H933.8 M919.4 109.4 H933.8" stroke="#a8a8a8" stroke-width="0.7" fill="none"/><rect x="922.8" y="103.3" width="3.8" height="3.6" fill="#3c86d6"/><path d="M101.8 129.5 V124.5 H106.8" stroke="#666" stroke-width="1" fill="none"/><path d="M104.3 127 L108.3 131 M108.5 127.8 V131.2 H105.1" stroke="#666" stroke-width="1" fill="none"/><path d="M315.5 129.5 V124.5 H320.5" stroke="#666" stroke-width="1" fill="none"/><path d="M318 127 L322 131 M322.2 127.8 V131.2 H318.8" stroke="#666" stroke-width="1" fill="none"/><path d="M488.5 129.5 V124.5 H493.5" stroke="#666" stroke-width="1" fill="none"/><path d="M491 127 L495 131 M495.2 127.8 V131.2 H491.8" stroke="#666" stroke-width="1" fill="none"/><path d="M635.5 129.5 V124.5 H640.5" stroke="#666" stroke-width="1" fill="none"/><path d="M638 127 L642 131 M642.2 127.8 V131.2 H638.8" stroke="#666" stroke-width="1" fill="none"/></svg>
<span class="t" style="left:281.50px;top:60.40px;font-size:12.5px;line-height:14px;color:#666;letter-spacing:0.456px;-webkit-text-stroke:0.35px #666;">A</span>
<span class="t" style="left:304.40px;top:61.40px;font-size:10.5px;line-height:12px;color:#666;letter-spacing:0.284px;-webkit-text-stroke:0.35px #666;">A</span>
<span class="t" style="left:291.80px;top:88.80px;font-size:13px;line-height:15px;color:#666;font-weight:700;transform:scaleX(0.9691);transform-origin:0 0;-webkit-text-stroke:0;">A</span>
<svg style="left:0;top:116px" width="1020" height="300" viewBox="0 116 1020 300"><rect x="665.5" y="126.5" width="27" height="24" fill="#fff" stroke="#8a8a8a" stroke-width="1"/><path d="M672.5 126.5 V150.5 M685.5 126.5 V150.5 M665.5 132.5 H692.5 M665.5 138.6 H692.5 M665.5 144.7 H692.5 " stroke="#a6a6a6" stroke-width="0.9" fill="none"/><rect x="672.5" y="132.5" width="13" height="6.1" fill="#f0bc76"/><rect x="678.6" y="142.2" width="16.8" height="13.8" fill="#fff"/><rect x="679.8" y="143.4" width="14.6" height="11.6" fill="#fff" stroke="#777" stroke-width="1"/><path d="M686 145.6 L682.4 147.4 L686 149.2 M682.4 150.8 H686 M682.4 152.6 H686 M688.2 148.6 L692 150.8 L688.2 153" stroke="#333" stroke-width="0.9" fill="none"/><rect x="665.5" y="170.5" width="27" height="24" fill="#fff" stroke="#8a8a8a" stroke-width="1"/><path d="M672.5 170.5 V194.5 M685.5 170.5 V194.5 M665.5 176.5 H692.5 M665.5 182.5 H692.5 M665.5 188.5 H692.5 " stroke="#a6a6a6" stroke-width="0.9" fill="none"/><rect x="672.9" y="171" width="12.2" height="17.2" fill="#f0bc76"/><path d="M672.5 176.5 H685.5 M672.5 182.5 H685.5" stroke="#d9a861" stroke-width="0.8"/><path d="M679 187.4 V174 M675.4 177.8 L679 174 L682.6 177.8" stroke="#555" stroke-width="1.3" fill="none"/><rect x="678.6" y="186.6" width="16.8" height="13.6" fill="#fff"/><rect x="679.8" y="187.8" width="14.6" height="11.4" fill="#fff" stroke="#777" stroke-width="1"/><text x="681.4" y="197.4" font-family="Liberation Sans, sans-serif" font-size="10" fill="#222" textLength="11.4" lengthAdjust="spacingAndGlyphs">10</text><rect x="665.5" y="217.5" width="27" height="25.5" fill="#fff" stroke="#8a8a8a" stroke-width="1"/><path d="M671.6 217.5 V243.0 M686.8 217.5 V243.0 M665.5 222.6 H692.5 M665.5 227.7 H692.5 M665.5 232.8 H692.5 M665.5 237.9 H692.5 " stroke="#a6a6a6" stroke-width="0.9" fill="none"/><rect x="672.1" y="218.2" width="9.299999999999955" height="3.7" fill="#4a82bd"/><path d="M682.6 220.0 H685.4" stroke="#444" stroke-width="0.9"/><rect x="672.1" y="223.29999999999998" width="2.7999999999999545" height="3.7" fill="#4a82bd"/><path d="M682.6 225.1 H685.4" stroke="#444" stroke-width="0.9"/><rect x="672.1" y="228.39999999999998" width="6.199999999999932" height="3.7" fill="#4a82bd"/><path d="M682.6 230.2 H685.4" stroke="#444" stroke-width="0.9"/><rect x="672.1" y="233.5" width="8.199999999999932" height="3.7" fill="#4a82bd"/><path d="M682.6 235.3 H685.4" stroke="#444" stroke-width="0.9"/><rect x="672.1" y="238.6" width="5.399999999999977" height="3.7" fill="#4a82bd"/><path d="M682.6 240.4 H685.4" stroke="#444" stroke-width="0.9"/><rect x="665.5" y="261.5" width="27" height="25" fill="#fff" stroke="#8a8a8a" stroke-width="1"/><path d="M671.6 261.5 V286.5 M686.8 261.5 V286.5 M665.5 266.5 H692.5 M665.5 271.5 H692.5 M665.5 276.5 H692.5 M665.5 281.5 H692.5 " stroke="#a6a6a6" stroke-width="0.9" fill="none"/><rect x="672.1" y="262.1" width="14.2" height="3.8" fill="#4a82bd"/><path d="M679.6 264.0 H685" stroke="#444" stroke-width="0.9"/><rect x="672.1" y="267.1" width="14.2" height="3.8" fill="#6f7f70"/><path d="M679.6 269.0 H685" stroke="#444" stroke-width="0.9"/><rect x="672.1" y="272.1" width="14.2" height="3.8" fill="#f5cb8e"/><path d="M679.6 274.0 H685" stroke="#444" stroke-width="0.9"/><rect x="672.1" y="277.1" width="14.2" height="3.8" fill="#e3a65a"/><path d="M679.6 279.0 H685" stroke="#444" stroke-width="0.9"/><rect x="672.1" y="282.1" width="14.2" height="3.8" fill="#c9700f"/><path d="M679.6 284.0 H685" stroke="#444" stroke-width="0.9"/><rect x="665.5" y="305.5" width="27" height="25.5" fill="#fff" stroke="#8a8a8a" stroke-width="1"/><path d="M671.6 305.5 V331.0 M686.8 305.5 V331.0 M665.5 310.6 H692.5 M665.5 315.7 H692.5 M665.5 320.8 H692.5 M665.5 325.9 H692.5 " stroke="#a6a6a6" stroke-width="0.9" fill="none"/><circle cx="675.2" cy="308.05" r="1.25" fill="#7f7f7f"/><path d="M679 308.0 H685" stroke="#444" stroke-width="0.9"/><circle cx="675.2" cy="313.15000000000003" r="1.25" fill="#e8912d"/><path d="M679 313.1 H685" stroke="#444" stroke-width="0.9"/><circle cx="675.2" cy="318.25" r="1.25" fill="#7f7f7f"/><path d="M679 318.2 H685" stroke="#444" stroke-width="0.9"/><circle cx="675.2" cy="323.35" r="1.25" fill="#e8912d"/><path d="M679 323.3 H685" stroke="#444" stroke-width="0.9"/><circle cx="675.2" cy="328.45" r="1.25" fill="#7f7f7f"/><path d="M679 328.4 H685" stroke="#444" stroke-width="0.9"/><rect x="662.3" y="347.5" width="12.4" height="12" fill="#fff" stroke="#5a5a5a" stroke-width="1"/><path d="M665.6999999999999 347.5 v12 M671.3 347.5 v12 M662.3 350.5 h12.4 M662.3 355.1 h12.4" stroke="#b4b4b4" stroke-width="0.8" stroke-dasharray="1.2 1"/><rect x="665.9" y="350.5" width="5.2" height="4.6" fill="#f0bc76"/><rect x="662.3" y="371.5" width="12.4" height="12" fill="#fff" stroke="#5a5a5a" stroke-width="1"/><path d="M665.6999999999999 371.5 v12 M671.3 371.5 v12 M662.3 374.5 h12.4 M662.3 379.1 h12.4" stroke="#b4b4b4" stroke-width="0.8" stroke-dasharray="1.2 1"/><rect x="665.9" y="374.5" width="5.2" height="4.6" fill="#f0bc76"/><path d="M670.6 377.6 L676 382.8 L671 388 L665.6 382.6 Z" fill="#fff"/><path d="M673 376.4 L676.4 379.8 L671.6 384.6 L668.2 381.2 Z" fill="#e3a04b"/><path d="M667.6 381.8 L671 385.2 L669.6 386.4 L666.4 383.2 Z" fill="#e3a04b"/><path d="M661.4 404.6 V394.5 H672.6" stroke="#5a5a5a" stroke-width="1" fill="none"/><rect x="663.4" y="396.5" width="12.4" height="12" fill="#fff" stroke="#5a5a5a" stroke-width="1"/><path d="M666.8 396.5 v12 M672.4 396.5 v12 M663.4 399.5 h12.4 M663.4 404.1 h12.4" stroke="#b4b4b4" stroke-width="0.8" stroke-dasharray="1.2 1"/><rect x="667.0" y="399.5" width="5.2" height="4.6" fill="#f0bc76"/></svg>
<div style="left:647.8px;top:51px;width:32px;height:32px;border-radius:50%;background:#fff;box-shadow:1px 2px 4px rgba(0,0,0,0.55)"></div>
<div style="left:651.5px;top:54.7px;width:24.6px;height:24.6px;border-radius:50%;background:#1479d2"></div>
<span class="t" style="left:658.80px;top:56.50px;font-size:20px;line-height:22px;color:#fff;font-weight:700;transform:scaleX(0.9528);transform-origin:0 0;-webkit-text-stroke:0;-webkit-text-stroke:0.35px #fff;">1</span>
<div style="left:868.5px;top:336.2px;width:32px;height:32px;border-radius:50%;background:#fff;box-shadow:1px 2px 4px rgba(0,0,0,0.55)"></div>
<div style="left:872.2px;top:339.9px;width:24.6px;height:24.6px;border-radius:50%;background:#1479d2"></div>
<span class="t" style="left:879.50px;top:341.70px;font-size:20px;line-height:22px;color:#fff;font-weight:700;transform:scaleX(0.9528);transform-origin:0 0;-webkit-text-stroke:0;-webkit-text-stroke:0.35px #fff;">2</span>
<div style="left:436px;top:322.6px;width:32px;height:32px;border-radius:50%;background:#fff;box-shadow:1px 2px 4px rgba(0,0,0,0.55)"></div>
<div style="left:439.7px;top:326.3px;width:24.6px;height:24.6px;border-radius:50%;background:#1479d2"></div>
<span class="t" style="left:447.00px;top:328.10px;font-size:20px;line-height:22px;color:#fff;font-weight:700;transform:scaleX(0.9528);transform-origin:0 0;-webkit-text-stroke:0;-webkit-text-stroke:0.35px #fff;">3</span>
<div style="left:186px;top:506px;width:32px;height:32px;border-radius:50%;background:#fff;box-shadow:1px 2px 4px rgba(0,0,0,0.55)"></div>
<div style="left:189.7px;top:509.7px;width:24.6px;height:24.6px;border-radius:50%;background:#1479d2"></div>
<span class="t" style="left:197.00px;top:511.50px;font-size:20px;line-height:22px;color:#fff;font-weight:700;transform:scaleX(0.9528);transform-origin:0 0;-webkit-text-stroke:0;-webkit-text-stroke:0.35px #fff;">4</span>
<div style="left:394.7px;top:499.70000000000005px;width:32px;height:32px;border-radius:50%;background:#fff;box-shadow:1px 2px 4px rgba(0,0,0,0.55)"></div>
<div style="left:398.4px;top:503.40000000000003px;width:24.6px;height:24.6px;border-radius:50%;background:#1479d2"></div>
<span class="t" style="left:405.70px;top:505.20px;font-size:20px;line-height:22px;color:#fff;font-weight:700;transform:scaleX(0.9528);transform-origin:0 0;-webkit-text-stroke:0;-webkit-text-stroke:0.35px #fff;">5</span>
<div style="left:402px;top:548.9px;width:32px;height:32px;border-radius:50%;background:#fff;box-shadow:1px 2px 4px rgba(0,0,0,0.55)"></div>
<div style="left:405.7px;top:552.6px;width:24.6px;height:24.6px;border-radius:50%;background:#1479d2"></div>
<span class="t" style="left:413.00px;top:554.40px;font-size:20px;line-height:22px;color:#fff;font-weight:700;transform:scaleX(0.9528);transform-origin:0 0;-webkit-text-stroke:0;-webkit-text-stroke:0.35px #fff;">6</span>
<svg style="left:830px;top:596px" width="60" height="48" viewBox="830 596 60 48"><defs><pattern id="hx" width="2" height="2" patternUnits="userSpaceOnUse"><rect width="2" height="2" fill="#d8d8d8"/><rect width="1" height="1" fill="#a4a4a4"/><rect x="1" y="1" width="1" height="1" fill="#a4a4a4"/></pattern></defs><rect x="837" y="616" width="5" height="17" rx="2.5" fill="#9dc690"/><rect x="846.2" y="609" width="4.6" height="26" rx="2.3" fill="#dadada"/><rect x="854.2" y="616.6" width="4.8" height="13.6" rx="2.4" fill="#9dc690"/><rect x="862.4" y="601.4" width="5" height="30.6" rx="2.5" fill="url(#hx)"/><rect x="871" y="616" width="5.2" height="24.8" rx="2.6" fill="#9dc690"/><rect x="879.4" y="613.4" width="4.4" height="18.6" rx="2.2" fill="url(#hx)"/></svg>
<span class="t" style="left:889.00px;top:607.40px;font-size:22.8px;line-height:26px;color:#9dc690;font-weight:700;transform:scaleX(0.8109);transform-origin:0 0;-webkit-text-stroke:0;-webkit-text-stroke:0.8px #9dc690;">Mister-Office</span>
<div style="left:44px;top:621px;width:522px;height:1.3px;overflow:hidden"><span class="t" style="left:6px;top:-10.6px;font-size:13.33px;line-height:15px;color:#111">07.02.2019</span><span class="t" style="left:86.7px;top:-10.6px;font-size:13.33px;line-height:15px;color:#111">Синий</span><span class="t" style="left:201.7px;top:-10.6px;font-size:13.33px;line-height:15px;color:#111">Молочный шоколад</span><span class="t" style="left:436px;top:-10.6px;font-size:13.33px;line-height:15px;color:#111">90</span><span class="t" style="left:487px;top:-10.6px;font-size:13.33px;line-height:15px;color:#111">9900</span></div>
<div style="left:0px;top:0px;width:1020px;height:10px;background:#fff"></div>
<div style="left:0px;top:0px;width:10px;height:655px;background:#fff"></div>
<div style="left:1009px;top:0px;width:11px;height:655px;background:#fff"></div>
<div style="left:0px;top:644px;width:1020px;height:11px;background:#fff"></div>
<div style="left:10px;top:10px;width:999px;height:634px;box-shadow:3px 3px 4px 0px rgba(0,0,0,0.7),0 0 3px rgba(0,0,0,0.15)"></div>
</div></body></html>
